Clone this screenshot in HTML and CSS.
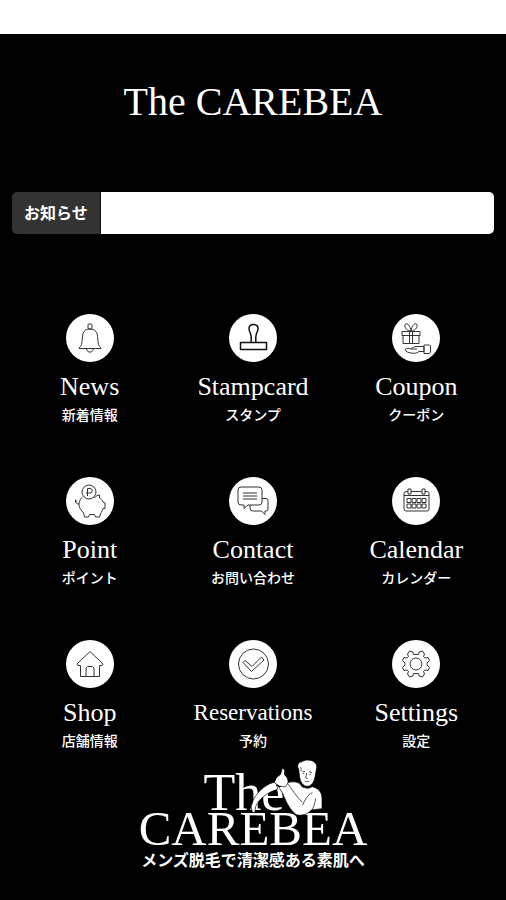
FILE: index.html
```html
<!DOCTYPE html>
<html lang="ja">
  <head>
    <meta charset="UTF-8" />
    <meta name="viewport" content="width=device-width, initial-scale=1.0" />
    <title>The CAREBEA</title>
    <link rel="stylesheet" href="styles.css">
  </head>
  <body>
    <div class="statusBar"></div>
    <main class="app">
      <h1 class="title">The CAREBEA</h1>

      <section class="notice">
        <h2 class="noticeLabel">お知らせ</h2>
        <div class="noticeText"></div>
      </section>

      <nav class="menu">
        <a class="menuItem" href="#news">
          <svg class="icon" viewBox="0 0 48 48">
            <rect x="22" y="10" width="4" height="5" rx="1" />
            <path d="M13 34.500c0-1 2-2 2.500-4 1-4 .5-7 1.500-11 1-3 3.500-4.500 7-4.500s6 1.500 7 4.500c1 4 .5 7 1.500 11 .5 2 2.500 3 2.500 4z" />
            <path d="M20 34.500c.5 1.500 2 2 2.500 3.500h3c.5-1.500 2-2 2.500-3.500" />
          </svg>
          <span class="name">News</span>
          <span class="sub">新着情報</span>
        </a>
        <a class="menuItem" href="#stamp">
          <svg class="icon bold" viewBox="0 0 48 48">
            <path d="M22 28.500c.5-4 .5-6-.5-9-1-2-1.500-3-1.500-5 0-3 2-4 4.500-4s4.500 1 4.500 4c0 2-.5 3-1.500 5-1 3-1 5-.5 9" />
            <path d="M11.500 28.500h26v7h-26z" />
          </svg>
          <span class="name">Stampcard</span>
          <span class="sub">スタンプ</span>
        </a>
        <a class="menuItem" href="#coupon">
          <svg class="icon" viewBox="0 0 48 48">
            <path d="M10 17.500h18v4H10zM11 21.500h16v8H11zM17.500 17v12.500M20.500 17v12.500" />
            <path d="M19 17c-3 0-7-3-6-6 .8-3 5-1 6 6zM19 17c3 0 7-3 6-6-.8-3-5-1-6 6z" />
            <path d="M13 35.500c2-2 4-1 6-.5 1.500-1.500 3-2.500 6-2.500h7v5h-5c-2 2-5 2-8 1.500-3-.5-5-1-6-3.500zM19 35h6M32 31h5.500l1 1v6l-1 1.500H32z" />
          </svg>
          <span class="name">Coupon</span>
          <span class="sub">クーポン</span>
        </a>
        <a class="menuItem" href="#point">
          <svg class="icon" viewBox="0 0 48 48">
            <circle cx="23" cy="15" r="7" />
            <path d="M21.500 19v-7.500h2.500a2.200 2.200 0 0 1 0 4.500h-4" />
            <path d="M16.500 20c-4 3-5 10-.5 14l1.500 2 1 4h4l1-2.500h5l1 2.500h4l1.500-4.500c1-.5 1.500-2.500 2-4h2v-5.500l-2-1c-1-2-2-3-3.500-4V18c-2 0-3.500 1-5 3" />
            <path d="M13 27c-3 0-4-2-2-3.500M9.500 22.500v3M33 25v.5" />
          </svg>
          <span class="name">Point</span>
          <span class="sub">ポイント</span>
        </a>
        <a class="menuItem" href="#contact">
          <svg class="icon" viewBox="0 0 48 48">
            <path d="M12 10h18a3 3 0 0 1 3 3v12a3 3 0 0 1-3 3H19l-4 3.500V28h-3a3 3 0 0 1-3-3V13a3 3 0 0 1 3-3z" />
            <path d="M14 16h14M14 19h14M14 22h14" />
            <path d="M33 21.500h4a2 2 0 0 1 2 2V32a2 2 0 0 1-2 2h-1v3.500L32.500 34H24a3 3 0 0 1-3-3v-3" />
          </svg>
          <span class="name">Contact</span>
          <span class="sub">お問い合わせ</span>
        </a>
        <a class="menuItem" href="#calendar">
          <svg class="icon" viewBox="0 0 48 48">
            <path d="M16 14.500h-2a2 2 0 0 0-2 2V32a2 2 0 0 0 2 2h21a2 2 0 0 0 2-2V16.500a2 2 0 0 0-2-2h-2M19 14.500h10.500M12 18.500h25" />
            <path d="M16 12h3v5h-3zM30 12h3v5h-3z" />
            <path d="M15 21.500h4v4h-4zM20 21.500h4v4h-4zM25 21.500h4v4h-4zM30 21.500h4v4h-4zM15 27h4v4h-4zM20 27h4v4h-4zM25 27h4v4h-4zM30 27h4v4h-4z" />
          </svg>
          <span class="name">Calendar</span>
          <span class="sub">カレンダー</span>
        </a>
        <a class="menuItem" href="#shop">
          <svg class="icon" viewBox="0 0 48 48">
            <path d="M24 11.500 37 24l-1 1.500h-2.500v11h-19v-11H12L11 24z" />
            <path d="M20 36.500V28l1.500-1.500h5L28 28v8.500" />
          </svg>
          <span class="name">Shop</span>
          <span class="sub">店舗情報</span>
        </a>
        <a class="menuItem" href="#reservations">
          <svg class="icon" viewBox="0 0 48 48">
            <circle cx="24.500" cy="24" r="15" />
            <path d="m16 20.500-2 2 8.500 9 12.500-11.500-2.500-3-9.500 9.500z" />
          </svg>
          <span class="name narrow">Reservations</span>
          <span class="sub">予約</span>
        </a>
        <a class="menuItem" href="#settings">
          <svg class="icon" viewBox="0 0 48 48">
            <path d="M21.500 14.500 21 12l-3.500-1-2 3 1 2.500-1.500 1.500-3-.5-1.500 3 2.500 2.500v2L10.500 27.500l1.500 3 3-.5 1.500 1.500-1 2.500 2 3 3.500-1 .5-2.500h5l.5 2.500 3.500 1 2-3-1-2.500 1.500-1.500 3 .5 1.500-3-2.500-2.500v-2l2.500-2.500-1.500-3-3 .5-1.500-1.500 1-2.500-2-3-3.500 1-.5 2.500z" />
            <circle cx="24" cy="24" r="6" />
          </svg>
          <span class="name">Settings</span>
          <span class="sub">設定</span>
        </a>
      </nav>

      <footer class="logo">
        <span class="logoThe">The</span>
        <span class="logoName">CAREBEA</span>
        <span class="logoText">メンズ脱毛で清潔感ある素肌へ</span>
        <svg class="man" viewBox="0 0 270 240">
          <!-- left arm -->
          <path d="M108 96C82 99 54 122 40 150l-7 20 4 16 7 3 3-19c8-22 34-43 66-52z" />
          <!-- shoulders and right arm -->
          <path d="M142 98c14-4 28-3 36 2l10 12 17 3 12-5c19 5 29 17 29 36v30l-32 4c-13 14-28 18-45 14-18-13-30-36-40-62l-12-20z" />
          <!-- hand -->
          <path d="M109 83l13-10 5-18 7 4-1 15c9 6 12 15 11 25l-8 12-18-3-15-10z" />
          <!-- head -->
          <path d="M176 58c-7-13 0-22 10-23 14-10 47-4 44 18l-5 28c-3 17-12 28-24 28-13-1-20-14-22-28z" />
          <path class="line" d="M181 51c2 3 3 5 2 13M187 66l8-2M207 65l9 3M200 69l-3 15 6 2M194 93c5 3 9 3 14 0M188 71h5M208 73h5M188 104v7M211 106l-1 7M142 100c12 14 26 39 45 57M188 166c6-18 17-32 29-38M227 145c-2 16-7 29-14 42" />
        </svg>
      </footer>
    </main>
  </body>
</html>
```

FILE: styles.css
```css
* {
  box-sizing: border-box;
}
body {
  margin: 0;
  background: #000;
  color: #fff;
  font-family: "Liberation Sans", "Noto Sans CJK JP", sans-serif;
}
.statusBar {
  height: 34px;
  background: #fff;
}
.app {
  padding: 0 12px 24px;
}
.title {
  margin: 0;
  padding: 44px 0 66px;
  font-family: "Liberation Serif", serif;
  font-size: 40px;
  font-weight: normal;
  line-height: 48px;
  text-align: center;
}
.notice {
  display: flex;
  height: 42px;
  border-radius: 5px;
  overflow: hidden;
}
.noticeLabel {
  margin: 0;
  padding: 0 12px;
  background: #333;
  border-right: 1px solid #111;
  font-size: 16px;
  line-height: 44px;
}
.noticeText {
  flex: 1;
  background: #fff;
}
.menu {
  display: grid;
  grid-template-columns: repeat(3, 1fr);
  row-gap: 52px;
  margin: 80px -4px 0;
}
.menuItem {
  display: flex;
  flex-direction: column;
  align-items: center;
  color: #fff;
  text-decoration: none;
}
.icon {
  width: 48px;
  height: 48px;
  border-radius: 50%;
  background: #fff;
  fill: none;
  stroke: #333;
  stroke-width: 1;
  stroke-linejoin: round;
}
.icon.bold {
  stroke: #111;
  stroke-width: 1.5;
}
.name {
  margin-top: 9px;
  font-family: "Liberation Serif", serif;
  font-size: 26px;
  line-height: 32px;
}
.name.narrow {
  font-size: 23px;
}
.sub {
  margin-top: 2px;
  font-size: 14px;
  font-weight: 500;
  line-height: 20px;
}
.logo {
  position: relative;
  display: flex;
  flex-direction: column;
  align-items: center;
  width: 228px;
  margin: 24px auto 0;
  white-space: nowrap;
}
.logoThe {
  padding-right: 18px;
  font-family: "Liberation Serif", serif;
  font-size: 52px;
  line-height: 36px;
}
.logoName {
  font-family: "Liberation Serif", serif;
  font-size: 49px;
  line-height: 36px;
}
.logoText {
  margin-top: 2px;
  font-size: 16px;
  font-weight: bold;
  line-height: 24px;
}
/* leans over the lettering */
.man {
  position: absolute;
  top: -25px;
  left: 101px;
  width: 90px;
  height: 80px;
  fill: #fff;
  stroke: #000;
  stroke-width: 2;
  stroke-linejoin: round;
}
.man .line {
  fill: none;
}
```
